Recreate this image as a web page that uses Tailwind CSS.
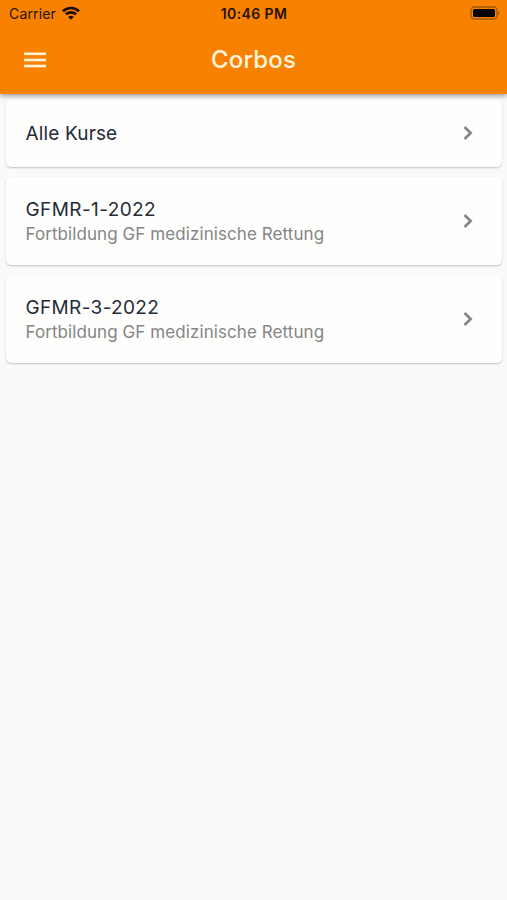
<!DOCTYPE html>
<html lang="de">
<head>
<meta charset="utf-8">
<title>Corbos</title>
<script src="https://cdn.jsdelivr.net/npm/@tailwindcss/browser@4"></script>
</head>
<body class="h-[900px] overflow-hidden bg-[#fafafa] font-['Inter',sans-serif]">
<header class="relative z-10 h-[94px] bg-[#f98100] shadow-[0_2px_5px_rgba(0,0,0,0.38)]">
  <div class="grid h-7 grid-cols-3 items-center pl-[8px] pr-[7px] text-[#241300]">
    <div class="flex items-center gap-[6px] pl-px">
      <span class="text-[14px] leading-7 tracking-[0.15px]">Carrier</span>
      <svg class="-mt-[3px] h-[14px] w-[18px]" viewBox="0 0 18 14" fill="none" stroke="#160b00" stroke-width="2.7">
        <path d="M1 5.2C5.5.9 12.500.9 17 5.2"/>
        <path d="M3.900 8.300C6.800 5.600 11.200 5.600 14.100 8.300"/>
        <path d="M6.200 10.900Q9 8.600 11.800 10.900L9 13.700Z" fill="#160b00" stroke="none"/>
      </svg>
    </div>
    <span class="text-center text-[14px] font-semibold leading-7 tracking-[0.4px]">10:46 PM</span>
    <svg class="-mt-[2px] h-[14px] w-[30px] justify-self-end" viewBox="0 0 30 14">
      <rect x="1" y="1" width="26" height="12" rx="3.500" fill="none" stroke="#a05808" stroke-width="1.300"/>
      <rect x="3" y="3" width="22" height="8" rx="1.500" fill="#000"/>
      <path d="M28 5Q31 7 28 9Z" fill="#a05808"/>
    </svg>
  </div>
  <div class="grid h-[64px] grid-cols-[60px_1fr_60px] items-center">
    <svg class="ml-6 h-4 w-[22px]" viewBox="0 0 22 16" fill="#fff2d8">
      <rect y="0.500" width="22" height="2.600"/><rect y="6.700" width="22" height="2.600"/><rect y="12.700" width="22" height="2.600"/>
    </svg>
    <h1 class="text-center text-[24px] font-medium leading-8 tracking-[0.2px] text-[#fff5df]">Corbos</h1>
  </div>
</header>
<main class="flex flex-col gap-[10px] pl-[6px] pr-[5px] pt-[5px]">
  <a class="flex h-[68px] items-center justify-between rounded-[5px] bg-[#fefefc] pl-[19.500px] pr-[29px] shadow-[0_1px_2px_rgba(0,0,0,0.22)]">
    <span class="pt-0.5 text-[19px] leading-6 tracking-[0.15px] text-[#252b38]">Alle Kurse</span>
    <svg class="h-[14px] w-[10px]" viewBox="0 0 10 14" fill="none" stroke="#858585" stroke-width="2.600"><path d="M1.500 1L7.700 7L1.500 13"/></svg>
  </a>
  <a class="flex h-[88px] items-center justify-between rounded-[5px] bg-[#fefefc] pl-[19.500px] pr-[29px] shadow-[0_1px_2px_rgba(0,0,0,0.22)]">
    <span class="flex flex-col pt-px">
      <span class="pt-px text-[19px] leading-6 tracking-[0.4px] text-[#252b38]">GFMR-1-2022</span>
      <span class="text-[17px] leading-6 tracking-[0.08px] text-[#858585]">Fortbildung GF medizinische Rettung</span>
    </span>
    <svg class="h-[14px] w-[10px]" viewBox="0 0 10 14" fill="none" stroke="#858585" stroke-width="2.600"><path d="M1.500 1L7.700 7L1.500 13"/></svg>
  </a>
  <a class="flex h-[88px] items-center justify-between rounded-[5px] bg-[#fefefc] pl-[19.500px] pr-[29px] shadow-[0_1px_2px_rgba(0,0,0,0.22)]">
    <span class="flex flex-col pt-px">
      <span class="pt-px text-[19px] leading-6 tracking-[0.35px] text-[#252b38]">GFMR-3-2022</span>
      <span class="text-[17px] leading-6 tracking-[0.08px] text-[#858585]">Fortbildung GF medizinische Rettung</span>
    </span>
    <svg class="h-[14px] w-[10px]" viewBox="0 0 10 14" fill="none" stroke="#858585" stroke-width="2.600"><path d="M1.500 1L7.700 7L1.500 13"/></svg>
  </a>
</main>
</body>
</html>
